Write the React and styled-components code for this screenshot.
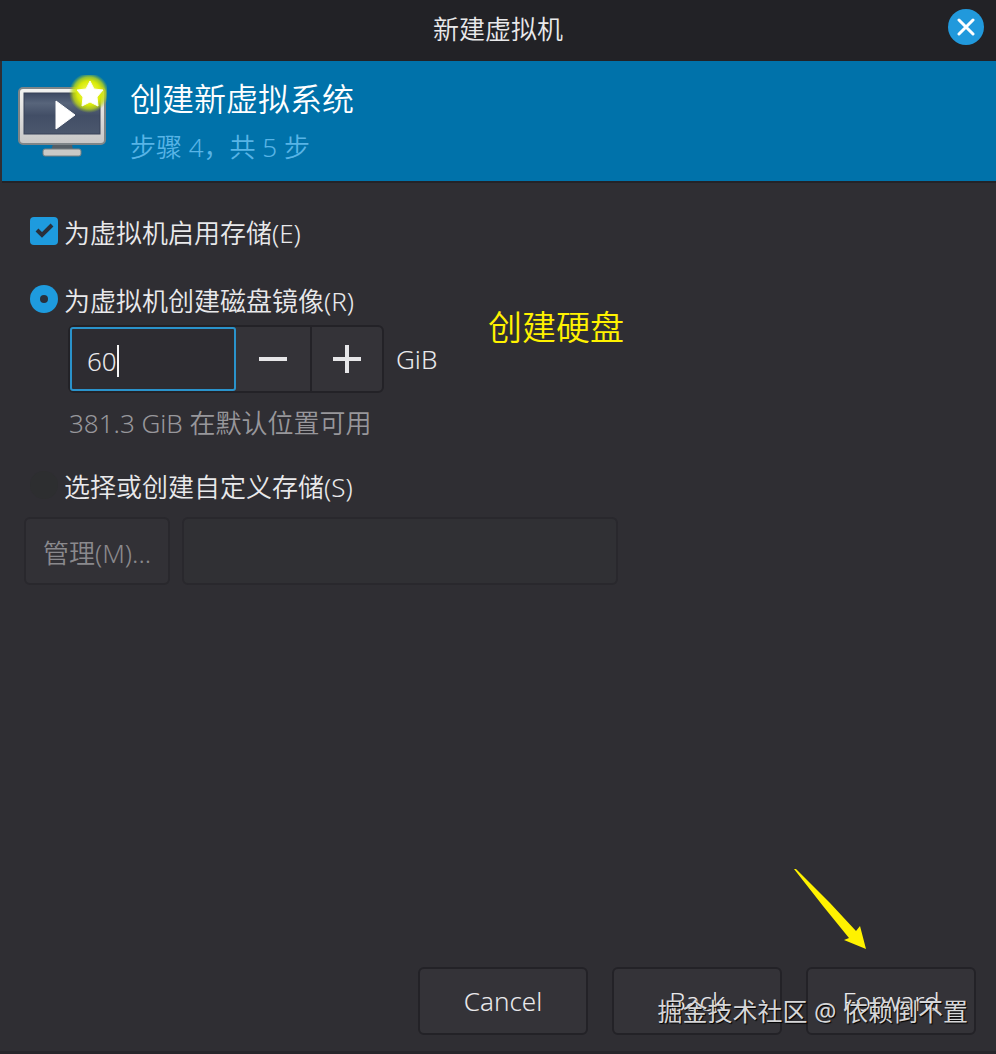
import React, { useState } from "react";
import styled, { createGlobalStyle } from "styled-components";

const GlobalStyle = createGlobalStyle`
  *, *::before, *::after { box-sizing: border-box; }
  body {
    margin: 0;
    background: #2f2e33;
    color: #e9e9eb;
    font: 350 26px/36px "Noto Sans", "Noto Sans CJK SC", sans-serif;
  }
  button, input { font: inherit; color: inherit; }
`;

const Window = styled.main`
  position: relative;
  display: flex;
  flex-direction: column;
  min-height: 100vh;
  border-bottom: 3px solid #27262b;
`;

const TitleBar = styled.header`
  display: grid;
  grid-template-columns: 48px 1fr 48px;
  align-items: center;
  height: 61px;
  padding-bottom: 8px;
  background: #222226;
`;

const WindowTitle = styled.h1`
  grid-column: 2;
  margin: 0;
  padding-top: 4px;
  font-size: 26px;
  font-weight: 350;
  text-align: center;
`;

const CloseButton = styled.button`
  display: grid;
  place-items: center;
  width: 36px;
  height: 36px;
  padding: 0;
  border: 0;
  border-radius: 50%;
  background: #2199dc;
`;

const Banner = styled.section`
  display: flex;
  gap: 23px;
  height: 122px;
  margin-left: 2px;
  padding: 14px 16px;
  border-bottom: 2px solid #232328;
  background: #0072aa;
`;

const BannerTitle = styled.h2`
  margin: 0;
  color: #fff;
  font-size: 32px;
  font-weight: 350;
  line-height: 48px;
`;

const BannerStep = styled.p`
  margin: 0;
  color: #58b4e6;
  line-height: 48px;
`;

const Form = styled.form`
  display: flex;
  flex: 1;
  flex-direction: column;
  padding: 30px 20px 16px 24px;
`;

const Option = styled.label`
  display: flex;
  align-items: center;
  gap: 6px;
  height: 40px;
  margin-left: 6px;
  margin-bottom: ${(p) => p.$gap || 0}px;
`;

const Mark = styled.span`
  display: grid;
  height: 32px;
  align-items: start;
  > * { grid-area: 1 / 1; }
`;

const Toggle = styled.input`
  appearance: none;
  width: 28px;
  height: 28px;
  margin: 0;
  border-radius: ${(p) => (p.type === "radio" ? "50%" : "4px")};
  background: #2d2e30;
  &:checked { background: #1e9bde; }
`;

const Storage = styled.div`
  display: flex;
  align-items: center;
  gap: 12px;
  margin: 4px 0 0 44px;
`;

const Spin = styled.div`
  display: flex;
  width: 316px;
  height: 68px;
  border: 2px solid #232227;
  border-radius: 6px;
  background: #343338;
`;

const SpinEntry = styled.span`
  display: flex;
  align-items: center;
  flex: 1;
  padding: 4px 0 0 15px;
  border: 2px solid #2a93cb;
  border-radius: 3px;
  background: #2d2c31;
`;

const SpinInput = styled.input`
  width: 2ch;
  padding: 0;
  border: 0;
  outline: 0;
  background: none;
`;

const Caret = styled.span`
  width: 2px;
  height: 32px;
  background: #f4f4f4;
`;

const SpinButton = styled.button`
  display: grid;
  place-items: center;
  width: ${(p) => (p.$divided ? 72 : 74)}px;
  padding: 0;
  border: 0;
  border-left: ${(p) => (p.$divided ? 2 : 0)}px solid #232227;
  background: none;
`;

const Hint = styled.p`
  margin: 12px 0 26px 45px;
  color: #98979b;
`;

const CustomRow = styled.div`
  display: flex;
  gap: 12px;
  margin-top: 10px;
`;

const Button = styled.button`
  width: ${(p) => p.$width}px;
  height: 68px;
  padding: 0;
  border: 2px solid #232227;
  border-radius: 6px;
  background: #343338;
  white-space: nowrap;
  &:disabled {
    border-color: #29282d;
    background: #323136;
    color: #8a898d;
    padding-top: 4px;
  }
`;

const PathInput = styled.input`
  width: 436px;
  height: 68px;
  border: 2px solid #29282d;
  border-radius: 6px;
  background: #303034;
`;

const Actions = styled.footer`
  display: flex;
  justify-content: flex-end;
  gap: 24px;
  margin-top: auto;
`;

const Note = styled.div`
  position: absolute;
  top: 303px;
  left: 488px;
  color: #fff200;
  font-size: 34px;
  line-height: 48px;
`;

const Arrow = styled.svg`
  position: absolute;
  right: 129px;
  bottom: 102px;
  pointer-events: none;
`;

const Watermark = styled.div`
  position: absolute;
  right: 28px;
  bottom: 22px;
  color: #d6d6d8;
  font-size: 25px;
  font-weight: 400;
  line-height: 36px;
  text-shadow: 1px 1px 1px #000;
  pointer-events: none;
`;

function MonitorIcon() {
  return (
    <svg width="89" height="88" viewBox="0 0 89 88" aria-hidden="true">
      <defs>
        <linearGradient id="screen" x1="0" y1="0" x2="0" y2="1">
          <stop offset="0" stopColor="#3d4962" />
          <stop offset=".25" stopColor="#58657b" />
          <stop offset=".55" stopColor="#424e66" />
          <stop offset="1" stopColor="#4b576d" />
        </linearGradient>
        <linearGradient id="frame" x1="0" y1="0" x2="0" y2="1">
          <stop offset="0" stopColor="#f4f4f2" />
          <stop offset="1" stopColor="#c6c6c6" />
        </linearGradient>
        <radialGradient id="glow">
          <stop offset="0" stopColor="#ffff70" />
          <stop offset=".6" stopColor="#d8ea08" />
          <stop offset=".8" stopColor="#c4dc10" stopOpacity=".75" />
          <stop offset="1" stopColor="#9cc820" stopOpacity="0" />
        </radialGradient>
      </defs>
      <path d="M35 69h19l1 7H33z" fill="#555f66" />
      <rect x="25" y="74" width="38" height="7" rx="2" fill="#c9c9c6" stroke="#777f80" />
      <rect x="1" y="13" width="86" height="56" rx="4" fill="url(#frame)" stroke="#7e8588" strokeWidth="2" />
      <rect x="6" y="18" width="76" height="41" fill="url(#screen)" stroke="#384359" />
      <path d="M38 26v28l19-14z" fill="#fff" stroke="#fff" strokeLinejoin="round" />
      <circle cx="71" cy="18" r="20" fill="url(#glow)" />
      <path d="M72 6l4 8 9 1-6 7 1 9-8-4-8 4 1-9-6-7 9-1z" fill="#fff" stroke="#fffff0" strokeLinejoin="round" />
    </svg>
  );
}

export default function App() {
  const [enabled, setEnabled] = useState(true);
  const [mode, setMode] = useState("create");
  const [size, setSize] = useState("60");
  const step = (n) => setSize(String(Math.max(1, Number(size) + n)));

  return (
    <>
      <GlobalStyle />
      <Window>
        <TitleBar>
          <WindowTitle>新建虚拟机</WindowTitle>
          <CloseButton type="button" aria-label="关闭">
            <svg width="18" height="18" viewBox="0 0 18 18" fill="none" stroke="#fff" strokeWidth="3" strokeLinecap="round">
              <path d="M2 2l14 14M16 2L2 16" />
            </svg>
          </CloseButton>
        </TitleBar>

        <Banner>
          <MonitorIcon />
          <div>
            <BannerTitle>创建新虚拟系统</BannerTitle>
            <BannerStep>步骤 4，共 5 步</BannerStep>
          </div>
        </Banner>

        <Form onSubmit={(e) => e.preventDefault()}>
          <Option $gap={28}>
            <Mark>
              <Toggle type="checkbox" checked={enabled} onChange={() => setEnabled(!enabled)} />
              {enabled && (
                <svg width="28" height="28" viewBox="0 0 28 28" fill="none" stroke="#29303b" strokeWidth="4" pointerEvents="none">
                  <path d="M7 13l5 5L22 8" />
                </svg>
              )}
            </Mark>
            为虚拟机启用存储(E)
          </Option>

          <Option>
            <Mark>
              <Toggle type="radio" name="mode" checked={mode === "create"} onChange={() => setMode("create")} />
              {mode === "create" && (
                <svg width="28" height="28" viewBox="0 0 28 28" pointerEvents="none">
                  <circle cx="14" cy="14" r="4" fill="#29303b" />
                </svg>
              )}
            </Mark>
            为虚拟机创建磁盘镜像(R)
          </Option>

          <Storage>
            <Spin>
              <SpinEntry>
                <SpinInput aria-label="磁盘大小" value={size} onChange={(e) => setSize(e.target.value)} />
                <Caret />
              </SpinEntry>
              <SpinButton type="button" aria-label="减少" onClick={() => step(-1)}>
                <svg width="28" height="28" stroke="#e6e6e8" strokeWidth="4"><path d="M0 14h28" /></svg>
              </SpinButton>
              <SpinButton type="button" aria-label="增加" $divided onClick={() => step(1)}>
                <svg width="28" height="28" stroke="#e6e6e8" strokeWidth="4"><path d="M0 14h28M14 0v28" /></svg>
              </SpinButton>
            </Spin>
            <span>GiB</span>
          </Storage>
          <Hint>381.3 GiB 在默认位置可用</Hint>

          <Option>
            <Mark>
              <Toggle type="radio" name="mode" checked={mode === "custom"} onChange={() => setMode("custom")} />
            </Mark>
            选择或创建自定义存储(S)
          </Option>
          <CustomRow>
            <Button type="button" $width={146} disabled>管理(M)...</Button>
            <PathInput aria-label="存储路径" disabled />
          </CustomRow>

          <Actions>
            <Button type="button" $width={170}>Cancel</Button>
            <Button type="button" $width={170}>Back</Button>
            <Button type="submit" $width={170}>Forward</Button>
          </Actions>
        </Form>

        <Note>创建硬盘</Note>
        <Arrow width="73" height="81" viewBox="0 0 73 81" aria-hidden="true">
          <path d="M0 1h2L36 35L62 63L66 58L72 81L50 72L55 70L29 38z" fill="#fff200" />
        </Arrow>
        <Watermark>掘金技术社区 @ 依赖倒不置</Watermark>
      </Window>
    </>
  );
}
